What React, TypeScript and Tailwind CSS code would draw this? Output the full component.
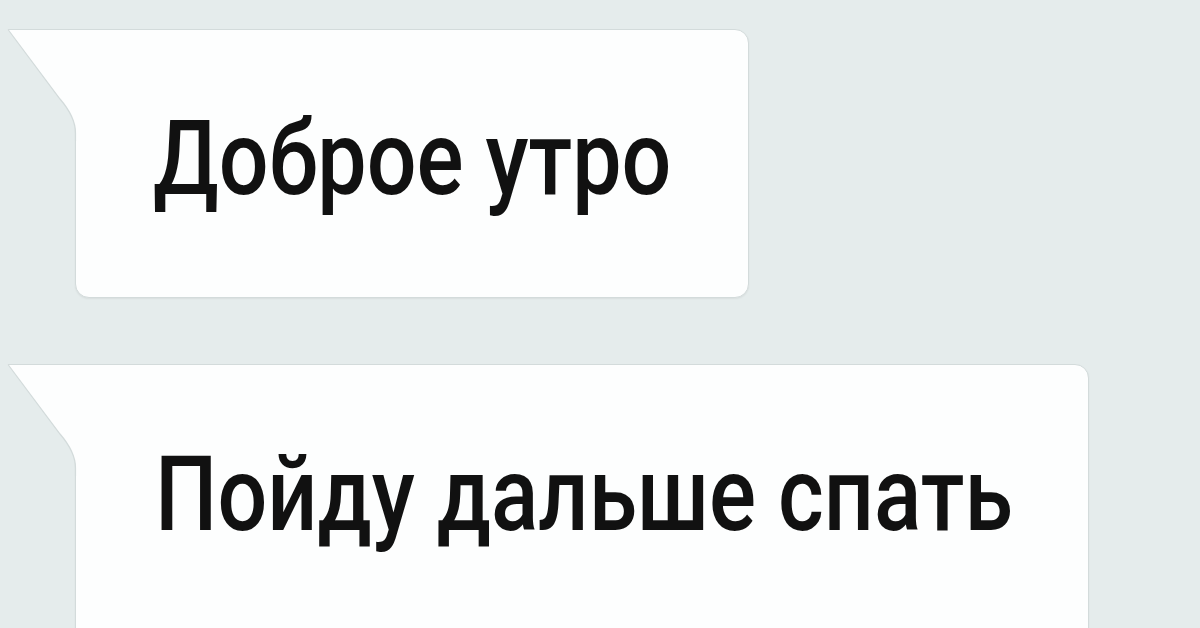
import React from "react";

function Tail() {
  return (
    <svg
      className="absolute left-[-69px] top-[-1px]"
      width="72"
      height="112"
      viewBox="0 0 72 112"
    >
      <path d="M1 0.5 L53 70 Q68.5 88 68.5 104 L68.5 112 L72 112 L72 0.5 Z" fill="#fdfefe" />
      <path d="M1 0.5 L53 70 Q68.5 88 68.5 104 L68.5 112" fill="none" stroke="#d3dbdb" strokeWidth="1.2" />
      <path d="M1 0.5 L72 0.5" fill="none" stroke="#d3dbdb" strokeWidth="1.2" />
    </svg>
  );
}

export default function App() {
  return (
    <div className="w-[1200px] h-[628px] overflow-hidden bg-[#e5ecec] pl-[75px] pt-[29px] flex flex-col gap-[66px]">
      <div className="flex">
        <div className="w-[674px] h-[269px] relative bg-[#fdfefe] border border-[#d3dbdb] rounded-[14px] rounded-tl-none shadow-[0_1px_2px_rgba(0,0,0,0.06)]">
          <Tail />
          <div className="pl-[77px] pt-[77px]">
            <div
              className="origin-left scale-x-[0.845] font-medium text-[104px] leading-[104px] text-[#111] whitespace-nowrap"
              style={{ fontFamily: "Roboto, 'Noto Sans', sans-serif" }}
            >
              Доброе утро
            </div>
          </div>
        </div>
      </div>
      <div className="flex">
        <div className="w-[1014px] h-[320px] relative bg-[#fdfefe] border border-[#d3dbdb] rounded-[14px] rounded-tl-none shadow-[0_1px_2px_rgba(0,0,0,0.06)]">
          <Tail />
          <div className="pl-[79px] pt-[78px]">
            <div
              className="origin-left scale-x-[0.845] font-medium text-[104px] leading-[104px] text-[#111] whitespace-nowrap"
              style={{ fontFamily: "Roboto, 'Noto Sans', sans-serif" }}
            >
              Пойду дальше спать
            </div>
          </div>
        </div>
      </div>
    </div>
  );
}
